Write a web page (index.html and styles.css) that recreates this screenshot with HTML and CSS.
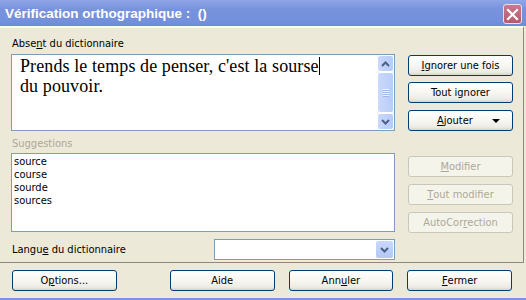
FILE: index.html
```html
<!DOCTYPE html>
<html lang="fr">
<head>
    <meta charset="UTF-8">
    <title>Vérification orthographique</title>
    <link rel="stylesheet" href="styles.css">
</head>
<body>
    <div class="window">
        <div class="titlebar">
            <span class="title">Vérification orthographique :&nbsp; ()</span>
            <span class="close-btn">
                <svg width="13" height="13" viewBox="0 0 13 13"><path d="M2 2 L11 11 M11 2 L2 11" stroke="#fff" stroke-width="2.2" stroke-linecap="square"/></svg>
            </span>
        </div>

        <div class="panel">
            <div class="left-col">
                <div class="label first">Abse<u>n</u>t du dictionnaire</div>
                <div class="text-box">
                    <div class="text-content">Prends le temps de penser, c'est la sourse<span class="caret"></span><br>du pouvoir.</div>
                    <div class="scrollbar">
                        <div class="sb-btn">
                            <svg width="9" height="6" viewBox="0 0 9 6"><path d="M1 5 L4.5 1.5 L8 5" fill="none" stroke="#4d6185" stroke-width="2"/></svg>
                        </div>
                        <div class="sb-thumb">
                            <span></span><span></span><span></span><span></span>
                        </div>
                        <div class="sb-btn">
                            <svg width="9" height="6" viewBox="0 0 9 6"><path d="M1 1 L4.5 4.5 L8 1" fill="none" stroke="#4d6185" stroke-width="2"/></svg>
                        </div>
                    </div>
                </div>

                <div class="label disabled">Suggestions</div>
                <div class="list-box">
                    <div class="item">source</div>
                    <div class="item">course</div>
                    <div class="item">sourde</div>
                    <div class="item">sources</div>
                </div>

                <div class="lang-row">
                    <div class="label">Langu<u>e</u> du dictionnaire</div>
                    <div class="combo">
                        <div class="combo-btn">
                            <svg width="9" height="6" viewBox="0 0 9 6"><path d="M1 1 L4.5 4.5 L8 1" fill="none" stroke="#4d6185" stroke-width="2"/></svg>
                        </div>
                    </div>
                </div>
            </div>

            <div class="right-col">
                <div class="btn b1"><u>I</u>gnorer une fois</div>
                <div class="btn b2">Tout ignorer</div>
                <div class="btn b3 split"><span><u>A</u>jouter</span><span class="arrow"></span></div>
                <div class="btn b4 off"><u>M</u>odifier</div>
                <div class="btn b5 off"><u>T</u>out modifier</div>
                <div class="btn b6 off">AutoCor<u>r</u>ection</div>
            </div>
        </div>

        <div class="footer">
            <div class="btn options">O<u>p</u>tions...</div>
            <div class="btn">Aide</div>
            <div class="btn">Ann<u>u</u>ler</div>
            <div class="btn"><u>F</u>ermer</div>
        </div>
    </div>
</body>
</html>
```

FILE: styles.css
```css
* {
    box-sizing: border-box;
}
body {
    margin: 0;
    padding: 0;
    background: #ece9d8;
    font-family: 'DejaVu Sans Condensed', 'Liberation Sans', sans-serif;
    font-size: 11px;
    color: #000;
}
.window {
    width: 526px;
    height: 300px;
    overflow: hidden;
    background: #ece9d8;
    border-bottom: 2px solid #7b96df;
}
.titlebar {
    height: 26px;
    display: flex;
    align-items: center;
    justify-content: space-between;
    padding: 0 4px 0 5px;
    background: linear-gradient(to bottom, #8ea6e6 0%, #7893dd 35%, #7390dc 85%, #6d8ad8 100%);
}
.title {
    font-family: 'Liberation Sans', sans-serif;
    font-weight: bold;
    font-size: 13.5px;
    color: #fff;
    padding-top: 1px;
}
.close-btn {
    width: 19px;
    height: 20px;
    margin-top: 2px;
    display: flex;
    align-items: center;
    justify-content: center;
    background: linear-gradient(to bottom, #c77a8b, #b45a70);
    border: 1px solid #ecdfe3;
    border-radius: 3px;
}
.panel {
    display: flex;
    height: 237px;
    width: 524px;
    border-top: 2px solid #fbfaf5;
    border-right: 1px solid #8c8a80;
    border-bottom: 1px solid #8c8a80;
    padding-left: 11px;
}
.left-col {
    width: 384px;
    display: flex;
    flex-direction: column;
}
.right-col {
    width: 105px;
    margin-left: 13px;
    display: flex;
    flex-direction: column;
}
.label {
    line-height: 13px;
    height: 13px;
    padding-left: 1px;
}
.label.first {
    margin-top: 9px;
}
.label.disabled {
    color: #aca899;
    margin-top: 6px;
}
.text-box {
    margin-top: 4px;
    height: 77px;
    border: 1px solid #7f9db9;
    background: #fff;
    display: flex;
}
.text-content {
    flex: 1;
    padding: 1px 0 0 8px;
    font-family: 'Liberation Serif', serif;
    font-size: 18px;
    letter-spacing: 0.1px;
    line-height: 20px;
}
.caret {
    display: inline-block;
    width: 1px;
    height: 18px;
    background: #000;
    vertical-align: -3px;
}
.scrollbar {
    width: 17px;
    display: flex;
    flex-direction: column;
    background: #f3f1ec;
}
.sb-btn {
    height: 17px;
    display: flex;
    align-items: center;
    justify-content: center;
    background: linear-gradient(to right, #c9d8fc, #b7cbf8);
    border: 1px solid #fff;
    border-radius: 3px;
}
.sb-thumb {
    flex: 1;
    display: flex;
    flex-direction: column;
    align-items: center;
    justify-content: center;
    gap: 1px;
    background: linear-gradient(to right, #cad9fc, #b9ccf8);
    border: 1px solid #fff;
    border-radius: 3px;
}
.sb-thumb span {
    width: 6px;
    height: 1px;
    background: #eef3fe;
    box-shadow: 0 1px 0 #9fb6e8;
}
.list-box {
    margin-top: 3px;
    height: 79px;
    border: 1px solid #7f9db9;
    background: #fff;
    padding: 1px 0 0 2px;
}
.item {
    line-height: 13px;
    height: 13px;
}
.lang-row {
    margin-top: 7px;
    display: flex;
    align-items: center;
    justify-content: space-between;
}
.combo {
    width: 181px;
    height: 21px;
    border: 1px solid #7f9db9;
    background: #fff;
    display: flex;
    justify-content: flex-end;
    padding: 1px;
}
.combo-btn {
    width: 17px;
    display: flex;
    align-items: center;
    justify-content: center;
    background: linear-gradient(to bottom, #c9d8fc, #b3c8f6);
    border-radius: 2px;
}
.btn {
    width: 105px;
    height: 21px;
    display: flex;
    align-items: center;
    justify-content: center;
    border: 1px solid #003c74;
    border-radius: 3px;
    background: linear-gradient(to bottom, #ffffff 0%, #f7f6f1 50%, #ecebe4 85%, #d8d5c8 100%);
}
.btn.off {
    border-color: #c9c7ba;
    background: #f5f4ea;
    color: #aca899;
}
.b1 { margin-top: 27px; }
.b2 { margin-top: 6px; }
.b3 { margin-top: 7px; }
.b4 { margin-top: 25px; }
.b5 { margin-top: 7px; }
.b6 { margin-top: 7px; }
.split {
    justify-content: space-between;
    padding: 0 12px 0 28px;
}
.arrow {
    width: 0;
    height: 0;
    border-left: 4px solid transparent;
    border-right: 4px solid transparent;
    border-top: 4px solid #000;
}
.footer {
    display: flex;
    padding: 7px 0 0 12px;
}
.footer .btn {
    margin-right: 14px;
}
.footer .options {
    margin-right: 53px;
}
```
